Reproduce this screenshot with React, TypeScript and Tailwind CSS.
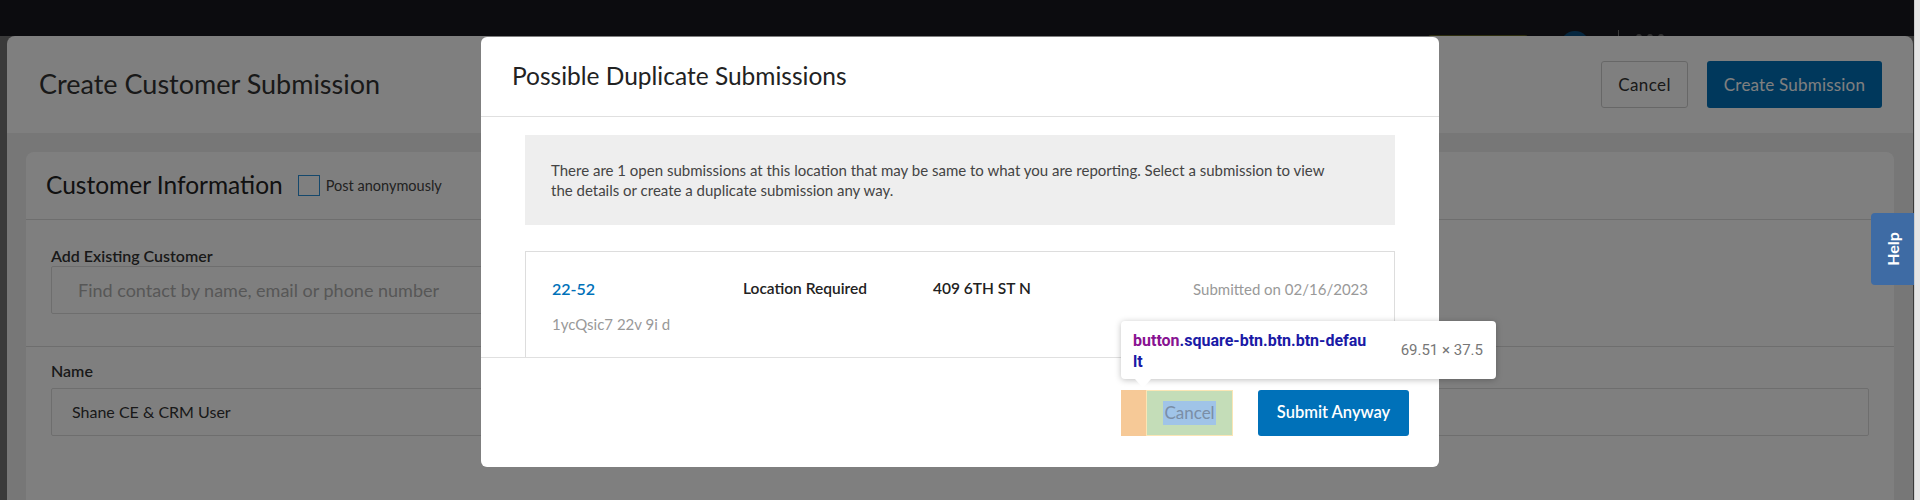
import React from "react";

const font = { fontFamily: "Lato, 'Liberation Sans', sans-serif" };

function TopBar() {
  return (
    <div className="relative h-[36px] bg-[#18181f] overflow-hidden">
      <div className="absolute left-[1428px] top-[35px] w-[100px] h-[6px] rounded-[3px] bg-[#5e5e20]" />
      <div className="absolute left-[1560px] top-[31px] w-[30px] h-[30px] rounded-full bg-[#0b4f80]" />
      <div className="absolute left-[1618px] top-[30px] w-px h-[8px] bg-[#777]" />
      <div className="absolute left-[1636px] top-[34px] flex gap-[5px]">
        <span className="w-[6px] h-[6px] rounded-full bg-[#666]" />
        <span className="w-[6px] h-[6px] rounded-full bg-[#666]" />
        <span className="w-[6px] h-[6px] rounded-full bg-[#666]" />
      </div>
    </div>
  );
}

function BackPanel() {
  return (
    <div className="ml-[7px] w-[1906px] rounded-t-[8px] bg-white overflow-hidden">
      <div className="h-[97px] flex items-center justify-between pl-[32px] pr-[31px]">
        <h1 className="text-[27px] text-[#333]">Create Customer Submission</h1>
        <div className="flex items-center gap-[19px]">
          <button className="w-[87px] h-[47px] border border-[#cfcfcf] rounded-[3px] text-[17px] text-[#333] tracking-[0.4px]">
            Cancel
          </button>
          <button className="w-[175px] h-[47px] rounded-[3px] bg-[#0071b9] text-[17px] text-white tracking-[0.2px]">
            Create Submission
          </button>
        </div>
      </div>
      <div className="bg-[#eeeeee] px-[19px] pt-[19px] h-[400px]">
        <div className="bg-white rounded-t-[8px] h-[400px]">
          <div className="h-[68px] flex items-center pl-[20px] border-b border-[#dddddd]">
            <h2 className="text-[24.5px] text-[#222]">Customer Information</h2>
            <span className="ml-[15px] w-[22px] h-[21px] border-[1.5px] border-[#2b90d8]" />
            <span className="ml-[6px] text-[14.5px] text-[#444]">Post anonymously</span>
          </div>
          <div className="px-[25px] pt-[26px] pb-[32px] border-b border-[#dddddd]">
            <label className="block text-[16px] font-semibold text-[#333] leading-[20px]">
              Add Existing Customer
            </label>
            <div className="w-[900px] h-[48px] border border-[#dcdcdc] rounded-[2px] flex items-center pl-[26px] text-[18px] text-[#aeaeae]">
              Find contact by name, email or phone number
            </div>
          </div>
          <div className="px-[25px] pt-[14px]">
            <label className="block text-[16px] font-semibold text-[#333] leading-[20px]">Name</label>
            <div className="mt-[7px] h-[48px] border border-[#dcdcdc] rounded-[2px] flex items-center pl-[20px] text-[16px] text-[#333]">
              Shane CE &amp; CRM User
            </div>
          </div>
        </div>
      </div>
    </div>
  );
}

function DuplicateModal() {
  return (
    <div className="absolute left-[481px] top-[37px] w-[958px] h-[430px] bg-white rounded-[6px] flex flex-col overflow-hidden">
      <div className="h-[80px] shrink-0 border-b border-[#e0e0e0] flex items-center pl-[31px]">
        <h3 className="text-[24.5px] text-[#222]">Possible Duplicate Submissions</h3>
      </div>
      <div className="h-[240px] shrink-0 overflow-hidden px-[44px] pt-[18px]">
        <div className="h-[90px] bg-[#eeeeee] px-[26px] flex items-center text-[15px] leading-[20px] text-[#444]">
          <p>
            There are 1 open submissions at this location that may be same to what you are reporting. Select a
            submission to view
            <br />
            the details or create a duplicate submission any way.
          </p>
        </div>
        <div className="mt-[26px] border border-[#dddddd] px-[26px] pt-[27px] pb-[27px]">
          <div className="flex items-center h-[20px] text-[15.5px]">
            <span className="w-[191px] text-[16px] font-semibold text-[#0071b9]">22-52</span>
            <span className="w-[190px] font-semibold text-[#222]">Location Required</span>
            <span className="flex-1 font-semibold text-[#222]">409 6TH ST N</span>
            <span className="text-[15px] text-[#999]">Submitted on 02/16/2023</span>
          </div>
          <div className="mt-[14px] h-[20px] text-[15px] text-[#999]">1ycQsic7 22v 9i d</div>
        </div>
      </div>
      <div className="flex-1 border-t border-[#e0e0e0] flex items-center justify-end pr-[30px]">
        <div className="flex items-center">
          <div className="w-[25px] h-[46px] bg-[#f6c997]" />
          <div className="w-[87px] h-[46px] border border-[#fbe6b5] bg-[#c4ddb8] flex items-center justify-center">
            <span className="bg-[#a0c4e8] h-[24px] px-[1px] flex items-center text-[17px] text-[#7a8ea6]">
              Cancel
            </span>
          </div>
        </div>
        <button className="ml-[25px] w-[151px] h-[46px] rounded-[3px] bg-[#0071b9] text-white text-[16.5px] font-semibold">
          Submit Anyway
        </button>
      </div>
    </div>
  );
}

function InspectTooltip() {
  return (
    <div
      className="absolute left-[1121px] top-[321px] w-[375px] h-[58px] bg-white rounded-[4px] shadow-[0_1px_6px_rgba(0,0,0,0.25)] flex items-center justify-between pl-[12px] pr-[13px]"
      style={{ fontFamily: "Roboto, 'Open Sans', sans-serif" }}
    >
      <div className="text-[16px] font-bold leading-[21px] pt-[2px]">
        <span className="text-[#881391]">button</span>
        <span className="text-[#1a1aa6]">.square-btn.btn.btn-defau</span>
        <br />
        <span className="text-[#1a1aa6]">lt</span>
      </div>
      <span className="text-[15px] text-[#777]">69.51 × 37.5</span>
      <div className="absolute left-[14px] -bottom-[9px] w-0 h-0 border-l-[8px] border-r-[8px] border-t-[9px] border-l-transparent border-r-transparent border-t-white" />
    </div>
  );
}

export default function App() {
  return (
    <div className="w-[1920px] h-[500px] flex overflow-hidden" style={font}>
      <div className="relative w-[1914px] h-[500px] bg-[#747474] overflow-hidden">
        <TopBar />
        <BackPanel />
        <div className="absolute inset-0 bg-black/50" />
        <DuplicateModal />
        <InspectTooltip />
        <div className="absolute left-[1871px] top-[213px] w-[43px] h-[72px] rounded-l-[4px] bg-[#3e6ba4] flex items-center justify-center">
          <span className="-rotate-90 text-white font-bold text-[16px]">Help</span>
        </div>
      </div>
      <div className="w-[6px] h-[500px] bg-[#e6e6e6] border-l border-[#cfcfcf]" />
    </div>
  );
}
